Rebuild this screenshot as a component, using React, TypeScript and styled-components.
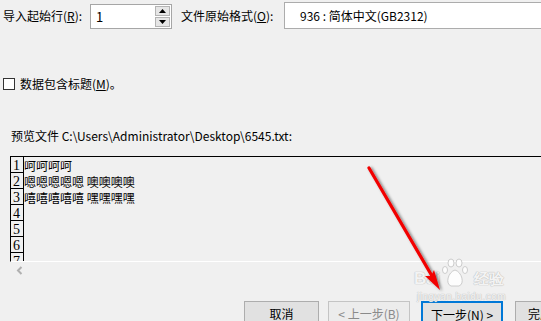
import React from 'react'
import styled, { createGlobalStyle } from 'styled-components'

const GlobalStyle = createGlobalStyle`
  html, body {
    margin: 0;
    padding: 0;
    background: #f0f0f0;
    overflow: hidden;
  }
  body {
    font-family: "Noto Sans CJK SC", "Noto Sans", sans-serif;
    font-size: 12px;
    color: #000;
  }
`

const Page = styled.div`
  position: relative;
  width: 541px;
  height: 321px;
  overflow: hidden;
  background: #f0f0f0;
`

const TopRow = styled.div`
  display: flex;
  align-items: center;
  height: 27px;
  padding: 2px 0 0 3px;
`

const Label = styled.span<{ $w: number; $pad?: number }>`
  width: ${p => p.$w}px;
  padding-left: ${p => p.$pad ?? 0}px;
  flex: none;
  white-space: nowrap;
  line-height: 16px;
`

const Spin = styled.div`
  box-sizing: border-box;
  width: 82px;
  height: 25px;
  margin-top: 1px;
  flex: none;
  display: flex;
  align-items: center;
  background: #fff;
  border: 1px solid #a6a6a6;
  padding: 0 0 0 5px;
`

const SpinValue = styled.span`
  flex: 1;
  font-size: 13px;
`

const SpinButtons = styled.div`
  display: flex;
  flex-direction: column;
  gap: 1px;
  margin-right: 1px;
`

const SpinBtn = styled.div`
  box-sizing: border-box;
  width: 15px;
  height: 10px;
  background: #e6e6e6;
  border: 1px solid #b4b4b4;
  display: flex;
  align-items: center;
  justify-content: center;
`

const Combo = styled.div`
  box-sizing: border-box;
  flex: 1;
  height: 27px;
  margin-right: -10px;
  background: #fff;
  border: 1px solid #acacac;
  display: flex;
  align-items: center;
  padding-left: 15px;
  white-space: pre;
`

const CheckRow = styled.div`
  display: flex;
  align-items: center;
  gap: 5px;
  padding: 46px 0 0 3px;
`

const CheckBox = styled.span`
  box-sizing: border-box;
  width: 12px;
  height: 12px;
  background: #fff;
  border: 1px solid #333;
`

const PreviewLabel = styled.div`
  padding: 36px 0 0 11px;
  line-height: 16px;
  white-space: nowrap;
`

const PreviewBox = styled.div`
  margin: 12px 0 0 10px;
  height: 104px;
  border-top: 1px solid #000;
  border-left: 1px solid #000;
  display: flex;
  overflow: hidden;
  border-bottom: 1px solid #fff;
`

const Gutter = styled.div`
  width: 12px;
  flex: none;
  border-right: 1px solid #000;
  display: flex;
  flex-direction: column;
`

const GutterCell = styled.div`
  box-sizing: border-box;
  height: 16px;
  border-bottom: 1px solid #000;
  font-family: "Liberation Serif", serif;
  font-size: 14px;
  line-height: 17px;
  padding-left: 2px;
  flex: none;
`

const Lines = styled.div`
  display: flex;
  flex-direction: column;
  font-family: "Noto Sans CJK SC", sans-serif;
  font-size: 12px;
  line-height: 16px;
  padding-top: 1px;
  white-space: pre;
`

const ScrollBar = styled.div`
  height: 17px;
  margin-left: 11px;
  display: flex;
  align-items: center;
  padding-left: 5px;
`

const ButtonRow = styled.div`
  display: flex;
  padding: 22px 0 0 244px;
`

const Button = styled.div<{ $w: number; $gap: number; $disabled?: boolean; $focused?: boolean; $start?: boolean }>`
  box-sizing: border-box;
  width: ${p => p.$w}px;
  height: 24px;
  margin-right: ${p => p.$gap}px;
  flex: none;
  display: flex;
  justify-content: ${p => (p.$start ? 'flex-start' : 'center')};
  padding: 3px 0 0 ${p => (p.$start ? 12 : 0)}px;
  font-size: 12px;
  background: ${p => (p.$disabled ? '#ececec' : '#e1e1e1')};
  color: ${p => (p.$disabled ? '#8a8a8a' : '#000')};
  border: ${p => (p.$focused ? '2px solid #0078d7' : p.$disabled ? '1px solid #c4c4c4' : '1px solid #adadad')};
  white-space: nowrap;
`

const Overlay = styled.svg`
  position: absolute;
  left: 0;
  top: 0;
  pointer-events: none;
`

const Watermark = styled.div`
  position: absolute;
  left: 414px;
  top: 258px;
  color: rgba(255, 255, 255, 0.85);
  text-shadow: 0 0 1px #b8b8b8, 0 0 1px #b8b8b8;
  font-family: "Liberation Sans", sans-serif;
  pointer-events: none;
`

const MarkMain = styled.div`
  display: flex;
  align-items: flex-end;
  gap: 2px;
  font-size: 17px;
  font-weight: bold;
  line-height: 18px;
`

const MarkSub = styled.div`
  font-size: 10px;
  letter-spacing: 0.5px;
  margin-top: 3px;
  padding-left: 3px;
`

const rows = ['1', '2', '3', '4', '5', '6', '7']
const lines = ['呵呵呵呵', '嗯嗯嗯嗯嗯 噢噢噢噢', '嘻嘻嘻嘻嘻 嘿嘿嘿嘿']

export default function App() {
  return (
    <Page>
      <GlobalStyle />
      <TopRow>
        <Label $w={87}>
          导入起始行(<u>R</u>):
        </Label>
        <Spin>
          <SpinValue>1</SpinValue>
          <SpinButtons>
            <SpinBtn>
              <svg width="7" height="4" viewBox="0 0 7 4"><path d="M0 4 L3.5 0 L7 4Z" fill="#000" /></svg>
            </SpinBtn>
            <SpinBtn>
              <svg width="7" height="4" viewBox="0 0 7 4"><path d="M0 0 L3.5 4 L7 0Z" fill="#000" /></svg>
            </SpinBtn>
          </SpinButtons>
        </Spin>
        <Label $w={103} $pad={9}>
          文件原始格式(<u>O</u>):
        </Label>
        <Combo>936 : 简体中文(GB2312)</Combo>
      </TopRow>

      <CheckRow>
        <CheckBox />
        <span>
          数据包含标题(<u>M</u>)。
        </span>
      </CheckRow>

      <PreviewLabel>预览文件 C:\Users\Administrator\Desktop\6545.txt:</PreviewLabel>

      <PreviewBox>
        <Gutter>
          {rows.map(r => (
            <GutterCell key={r}>{r}</GutterCell>
          ))}
        </Gutter>
        <Lines>
          {lines.map(l => (
            <span key={l}>{l}</span>
          ))}
        </Lines>
      </PreviewBox>
      <ScrollBar>
        <svg width="7" height="9" viewBox="0 0 7 9"><path d="M5.5 1 L2 4.5 L5.5 8" stroke="#b0b0b0" strokeWidth="2" fill="none" /></svg>
      </ScrollBar>

      <ButtonRow>
        <Button $w={75} $gap={9}>取消</Button>
        <Button $w={82} $gap={11} $disabled>
          &lt; 上一步(B)
        </Button>
        <Button $w={82} $gap={12} $focused>
          下一步(<u>N</u>) &gt;
        </Button>
        <Button $w={82} $gap={0} $start>完成</Button>
      </ButtonRow>

      <Watermark>
        <MarkMain>
          <span>Bai</span>
          <svg width="30" height="30" viewBox="0 0 30 30">
            <g fill="rgba(255,255,255,0.85)" stroke="#c0c0c0" strokeWidth="0.8">
              <ellipse cx="9" cy="5" rx="3" ry="4" />
              <ellipse cx="17" cy="5" rx="3" ry="4" />
              <ellipse cx="3" cy="12" rx="2.5" ry="3.5" />
              <ellipse cx="23" cy="12" rx="2.5" ry="3.5" />
              <path d="M13 12 C6 14 3 26 9 28 L17 28 C23 26 20 14 13 12Z" />
            </g>
          </svg>
          <span style={{ fontSize: 15 }}>经验</span>
        </MarkMain>
        <MarkSub>jingyan.baidu.com</MarkSub>
      </Watermark>

      <Overlay width="541" height="321" viewBox="0 0 541 321">
        <defs>
          <filter id="sh" x="-20%" y="-20%" width="140%" height="140%">
            <feGaussianBlur in="SourceAlpha" stdDeviation="1.5" />
            <feOffset dx="2" dy="1" />
            <feComponentTransfer>
              <feFuncA type="linear" slope="0.5" />
            </feComponentTransfer>
            <feMerge>
              <feMergeNode />
              <feMergeNode in="SourceGraphic" />
            </feMerge>
          </filter>
        </defs>
        <g filter="url(#sh)">
          <line x1="369" y1="168" x2="432" y2="276" stroke="#f20000" strokeWidth="3.2" strokeLinecap="round" />
          <path d="M440 290 L425 276 L431 276 L434 270 Z" fill="#f20000" />
        </g>
      </Overlay>
    </Page>
  )
}
